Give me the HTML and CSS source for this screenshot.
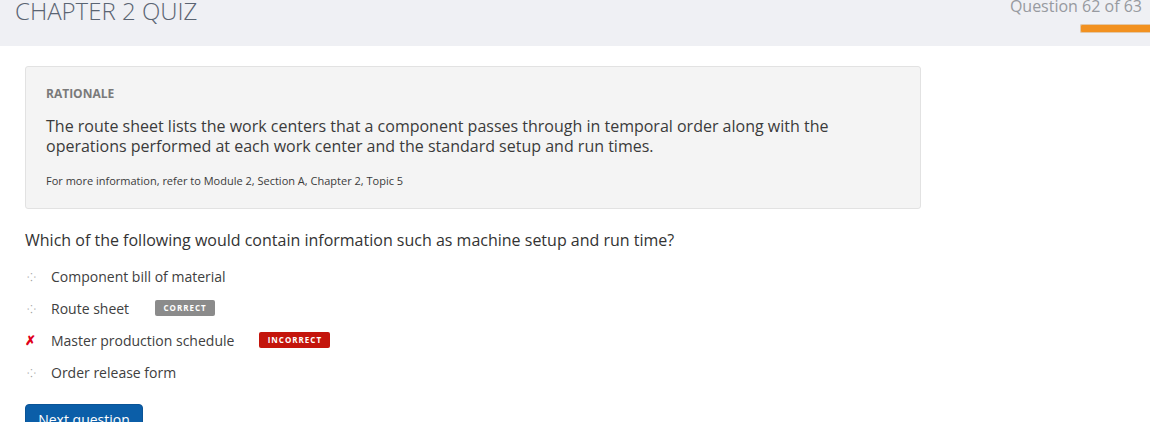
FILE: index.html
```html
<!DOCTYPE html>
<html>
<head>
<meta charset="utf-8">
<link rel="stylesheet" href="styles.css">
</head>
<body>
<header class="topbar">
  <h1 class="quiz-title">CHAPTER 2 QUIZ</h1>
  <div class="progress">
    <div class="progress-label">Question 62 of 63</div>
    <div class="progress-bar"></div>
  </div>
</header>
<main class="content">
  <section class="rationale">
    <h2 class="rationale-title">RATIONALE</h2>
    <p class="rationale-text">The route sheet lists the work centers that a component passes through in temporal order along with the operations performed at each work center and the standard setup and run times.</p>
    <p class="rationale-ref">For more information, refer to Module 2, Section A, Chapter 2, Topic 5</p>
  </section>
  <p class="question">Which of the following would contain information such as machine setup and run time?</p>
  <ul class="options">
    <li class="option"><span class="mark dot">&#x2058;</span><span class="opt-text">Component bill of material</span></li>
    <li class="option"><span class="mark dot">&#x2058;</span><span class="opt-text">Route sheet</span><span class="badge badge-correct">CORRECT</span></li>
    <li class="option"><span class="mark cross">&#x2717;</span><span class="opt-text">Master production schedule</span><span class="badge badge-incorrect">INCORRECT</span></li>
    <li class="option"><span class="mark dot">&#x2058;</span><span class="opt-text">Order release form</span></li>
  </ul>
  <button class="next-btn">Next question</button>
</main>
</body>
</html>
```

FILE: styles.css
```css
* { box-sizing: border-box; }
html, body { margin: 0; padding: 0; background: #ffffff; }
body { font-family: "Open Sans", "Liberation Sans", sans-serif; color: #333; overflow: hidden; height: 422px; }

.topbar {
  height: 46px;
  background: #eff0f4;
  display: flex;
  justify-content: space-between;
  align-items: flex-start;
}
.quiz-title {
  margin: -6px 0 0 15px;
  font-size: 24px;
  font-weight: 300;
  color: #5a6472;
  line-height: 33px;
}
.progress {
  display: flex;
  flex-direction: column;
  align-items: flex-end;
}
.progress-label {
  margin: -5px 8px 0 0;
  font-size: 16px;
  line-height: 22px;
  color: #979aa0;
}
.progress-bar {
  margin-top: 7px;
  width: 70px;
  height: 9px;
  background: #f29120;
  border: 1px solid #e2c8a8;
  border-right: none;
  border-radius: 2px 0 0 2px;
}

.content { padding: 20px 0 0 25px; }

.rationale {
  width: 896px;
  background: #f4f4f4;
  border: 1px solid #e2e2e2;
  border-radius: 3px;
  padding: 19px 20px 19px 20px;
}
.rationale-title {
  margin: 0;
  font-size: 12px;
  font-weight: 700;
  color: #7a7a7a;
  line-height: 16px;
}
.rationale-text {
  margin: 14px 0 0 0;
  font-size: 16px;
  line-height: 20px;
  color: #3b3b3b;
  max-width: 800px;
}
.rationale-ref {
  margin: 17px 0 0 0;
  font-size: 11px;
  line-height: 16px;
  color: #3b3b3b;
}

.question {
  margin: 20px 0 0 0;
  font-size: 16px;
  line-height: 22px;
  color: #333;
}

.options { list-style: none; margin: 9px 0 0 0; padding: 0; }
.option {
  display: flex;
  align-items: center;
  height: 32px;
  font-size: 14px;
  color: #404040;
}
.mark { width: 26px; display: inline-block; }
.dot { color: #a0a0a0; font-size: 11px; padding-left: 2px; }
.cross { color: #e0001a; font-size: 13px; font-weight: 700; padding-left: 0; }
.badge {
  display: inline-block;
  font-size: 8px;
  font-weight: 700;
  letter-spacing: 1px;
  color: #fff;
  line-height: 16px;
  height: 16px;
  border-radius: 2px;
  text-align: center;
}
.badge-correct { background: #8b8b8b; margin-left: 26px; width: 60px; }
.badge-incorrect { background: #c4150c; margin-left: 25px; width: 71px; }

.next-btn {
  margin-top: 16px;
  width: 118px;
  height: 36px;
  background: #0b5ea8;
  border: 1px solid #0a5497;
  border-radius: 4px;
  color: #fff;
  font-family: "Open Sans", "Liberation Sans", sans-serif;
  font-size: 14px;
  padding: 0 0 4px 0;
  text-align: center;
  line-height: 22px;
  vertical-align: top;
}
```
